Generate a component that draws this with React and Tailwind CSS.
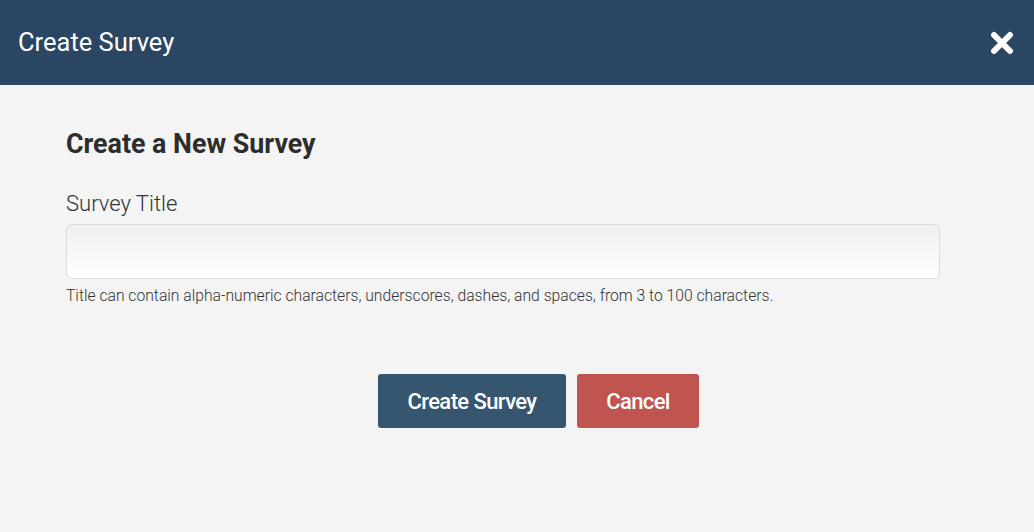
import React from 'react';

export default function App() {
  return (
    <div className="w-[1034px] h-[532px] bg-[#f4f4f4] flex flex-col" style={{ fontFamily: 'Roboto, "Liberation Sans", sans-serif' }}>
      <header className="h-[85px] bg-[#2a4663] flex items-center justify-between pl-[18px] pr-[20px]">
        <h1 className="text-white text-[25.5px] leading-none">Create Survey</h1>
        <button className="text-white">
          <svg width="24" height="24" viewBox="0 0 24 24">
            <path d="M4 4 L20 20 M20 4 L4 20" stroke="white" strokeWidth="6" strokeLinecap="round" />
          </svg>
        </button>
      </header>
      <main className="px-[66px] pt-[44px]">
        <h2 className="text-[#2d2d2d] text-[26.8px] font-bold leading-[30px]">Create a New Survey</h2>
        <label className="block mt-[30px] text-[#333] text-[22px] font-light leading-[30px]">Survey Title</label>
        <input
          type="text"
          className="mt-[5px] block w-[874px] h-[55px] rounded-[6px] border border-[#dcdcdc] bg-gradient-to-b from-[#f0f0f0] to-white outline-none"
        />
        <p className="mt-[7px] text-[15.7px] font-light text-[#333] leading-[20px]">
          Title can contain alpha-numeric characters, underscores, dashes, and spaces, from 3 to 100 characters.
        </p>
        <div className="mt-[68px] flex justify-center gap-[11px] ml-[43px]">
          <button className="w-[188px] h-[54px] rounded-[3px] bg-[#36566f] text-white text-[22px] font-medium tracking-[-0.6px]">Create Survey</button>
          <button className="w-[122px] h-[54px] rounded-[3px] bg-[#c0544f] text-white text-[22px] font-medium tracking-[-0.6px]">Cancel</button>
        </div>
      </main>
    </div>
  );
}
